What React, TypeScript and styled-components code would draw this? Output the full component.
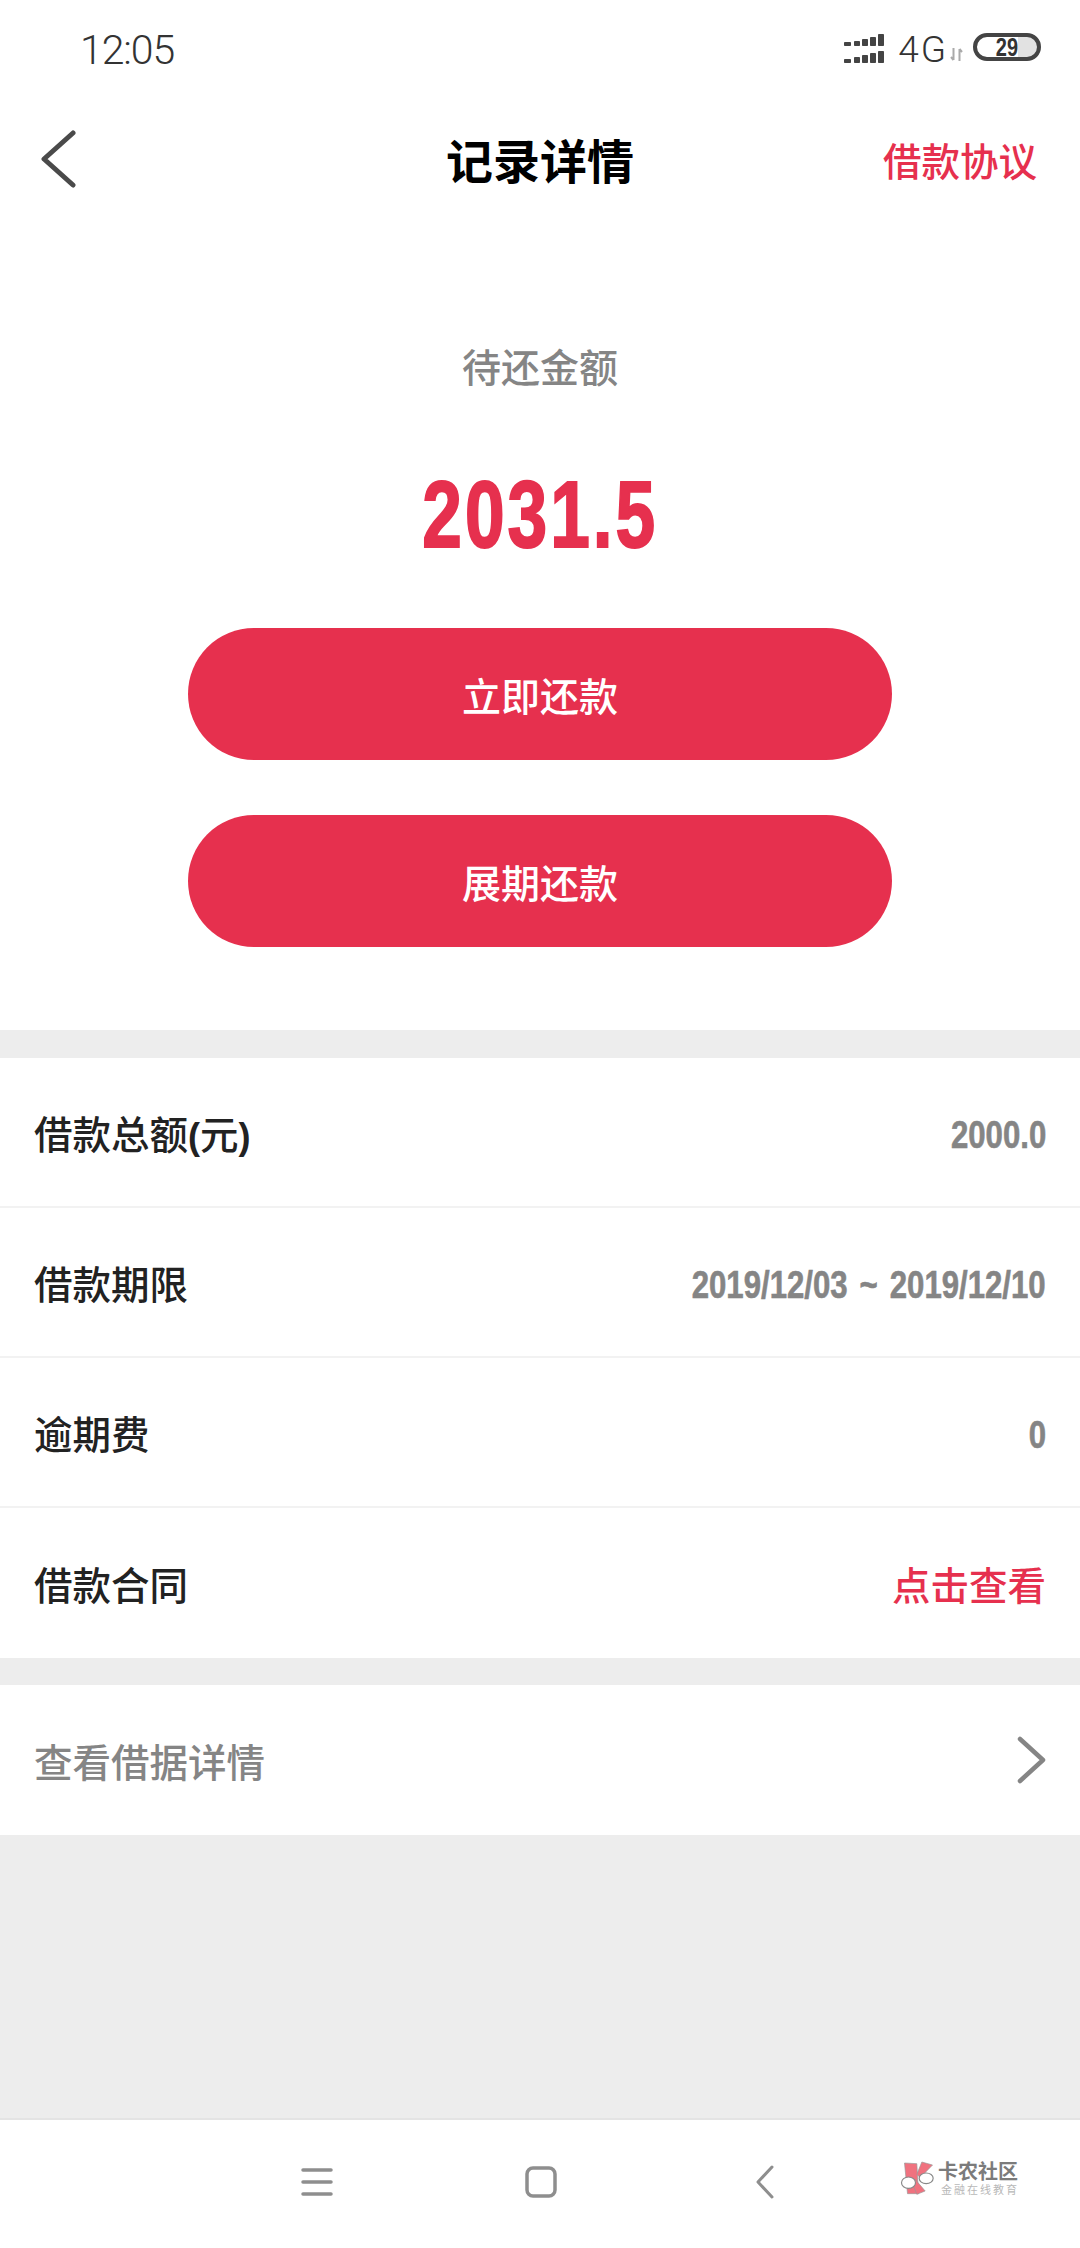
import React from "react";
import styled, { createGlobalStyle } from "styled-components";

const RED = "#e6304e";
const GREY = "#858585";
const BAND = "#ededed";
const CJK = '"Noto Sans CJK SC", "Noto Sans", sans-serif';
const DIGITS = '"Liberation Sans", sans-serif';

const GlobalStyle = createGlobalStyle`
  html, body {
    margin: 0;
    padding: 0;
    background: #fff;
  }
  * {
    box-sizing: border-box;
  }
`;

const Page = styled.div`
  width: 1080px;
  height: 2248px;
  display: flex;
  flex-direction: column;
  background: ${BAND};
  font-family: ${CJK};
  overflow: hidden;
`;

const StatusBar = styled.div`
  height: 100px;
  flex: none;
  display: flex;
  align-items: flex-start;
  justify-content: space-between;
  padding: 28px 39px 0 80px;
  background: #fff;
`;

const Time = styled.span`
  font-family: Roboto, sans-serif;
  font-size: 41px;
  font-weight: 300;
  line-height: 44px;
  color: #333;
  letter-spacing: -1.1px;
`;

const StatusIcons = styled.div`
  display: flex;
  align-items: flex-start;
  padding-top: 5px;
`;

const NetworkLabel = styled.span`
  font-family: Roboto, sans-serif;
  font-size: 37px;
  font-weight: 300;
  line-height: 34px;
  letter-spacing: 2px;
  color: #333;
  margin-left: 14px;
`;

const Arrows = styled.svg`
  width: 13px;
  height: 13px;
  margin: 15px 10px 0 2px;
`;

const Battery = styled.div`
  width: 68px;
  height: 28px;
  border: 4px solid #444;
  border-radius: 14px;
  background: linear-gradient(to right, #fff 0 41px, #e2e2e2 41px 100%);
  text-align: center;
`;

const BatteryLevel = styled.span`
  display: inline-block;
  font-family: ${DIGITS};
  font-weight: 700;
  font-size: 25px;
  line-height: 20px;
  color: #333;
  transform: scaleX(0.8);
`;

const Header = styled.header`
  height: 118px;
  flex: none;
  display: flex;
  align-items: center;
  justify-content: space-between;
  position: relative;
  padding: 0 43px 0 40px;
  background: #fff;
`;

const Title = styled.h1`
  position: absolute;
  left: 0;
  right: 0;
  margin: 0;
  text-align: center;
  font-size: 47px;
  line-height: 60px;
  font-weight: 700;
  color: #000;
`;

const HeaderLink = styled.a`
  position: relative;
  font-size: 38.5px;
  line-height: 50px;
  font-weight: 500;
  color: ${RED};
`;

const Hero = styled.section`
  flex: none;
  display: flex;
  flex-direction: column;
  align-items: center;
  padding: 122px 0 83px;
  background: #fff;
`;

const AmountLabel = styled.div`
  font-size: 39px;
  line-height: 50px;
  font-weight: 500;
  color: ${GREY};
`;

const Amount = styled.div`
  margin: 64px 0 54px;
  height: 120px;
  font-family: ${DIGITS};
  font-weight: 700;
  font-size: 95px;
  line-height: 120px;
  letter-spacing: 4px;
  color: ${RED};
  -webkit-text-stroke: 2px ${RED};
  transform: scaleX(0.75);
`;

const ActionButton = styled.button`
  width: 704px;
  height: 132px;
  border: none;
  border-radius: 66px;
  background: ${RED};
  color: #fff;
  font-family: ${CJK};
  font-size: 39px;
  font-weight: 500;
  padding: 0;

  & + & {
    margin-top: 55px;
  }
`;

const Card = styled.section<{ $top: number }>`
  flex: none;
  margin-top: ${(p) => p.$top}px;
  background: #fff;
`;

const Row = styled.div`
  height: 150px;
  display: flex;
  align-items: center;
  justify-content: space-between;
  padding: 0 34px;
  border-bottom: 2px solid #f2f2f2;

  &:last-child {
    border-bottom: none;
  }
`;

const RowLabel = styled.span<{ $muted?: boolean }>`
  font-size: 38.5px;
  line-height: 50px;
  font-weight: 500;
  color: ${(p) => (p.$muted ? GREY : "#222")};
`;

const Paren = styled.span`
  font-family: ${DIGITS};
  font-weight: 700;
  font-size: 36px;
  line-height: 0;
`;

const RowValue = styled.span`
  display: inline-block;
  margin-top: 6px;
  font-family: ${DIGITS};
  font-weight: 700;
  font-size: 38px;
  line-height: 50px;
  word-spacing: 4px;
  color: ${GREY};
  -webkit-text-stroke: 0.6px ${GREY};
  transform: scaleX(0.82);
  transform-origin: right center;
`;

const RowLink = styled.a`
  font-size: 38.5px;
  line-height: 50px;
  font-weight: 500;
  color: ${RED};
`;

const Spacer = styled.div`
  flex: 1;
`;

const NavBar = styled.nav`
  height: 130px;
  flex: none;
  display: grid;
  grid-template-columns: repeat(3, 224px) 1fr;
  align-items: center;
  justify-items: center;
  padding-left: 205px;
  padding-bottom: 4px;
  background: #fff;
  border-top: 2px solid #e4e4e4;
`;

const Logo = styled.div`
  justify-self: start;
  margin: 0 0 8px 23px;
  display: flex;
  align-items: center;
  gap: 1px;
`;

const LogoText = styled.div`
  display: flex;
  flex-direction: column;
`;

const LogoName = styled.span`
  font-size: 20px;
  line-height: 22px;
  font-weight: 700;
  color: #7b7b7b;
`;

const LogoSlogan = styled.span`
  font-size: 11px;
  line-height: 14px;
  letter-spacing: 2px;
  margin-left: 3px;
  color: #b8b8b8;
`;

const rows = [
  { label: <>借款总额<Paren>(</Paren>元<Paren>)</Paren></>, value: "2000.0", id: "total" },
  { label: "借款期限", value: "2019/12/03 ~ 2019/12/10", id: "term" },
  { label: "逾期费", value: "0", id: "overdue" },
];

const signalBars = [
  [0, 9, 7, 4],
  [10, 8, 6, 5],
  [18, 6, 6, 7],
  [26, 4, 6, 9],
  [34, 1, 6, 12],
  [0, 26, 7, 4],
  [10, 24, 6, 6],
  [18, 22, 6, 8],
  [26, 20, 6, 10],
  [34, 18, 6, 12],
];

const App = () => {
  return (
    <Page>
      <GlobalStyle />
      <StatusBar>
        <Time>12:05</Time>
        <StatusIcons>
          <svg width="40" height="30" viewBox="0 0 40 30" fill="#444">
            {signalBars.map(([x, y, w, h]) => (
              <rect key={`${x}-${y}`} x={x} y={y} width={w} height={h} rx="0.8" />
            ))}
          </svg>
          <NetworkLabel>4G</NetworkLabel>
          <Arrows viewBox="0 0 13 13" fill="none" stroke="#aaa" strokeWidth="2">
            <path d="M3.5 0v12M1 9l2.5 3M9.5 13V1M12 4L9.5 1" />
          </Arrows>
          <Battery>
            <BatteryLevel>29</BatteryLevel>
          </Battery>
        </StatusIcons>
      </StatusBar>

      <Header>
        <svg width="36" height="58" viewBox="0 0 36 58" fill="none">
          <path d="M33 3L4 29l29 26" stroke="#4a4a4a" strokeWidth="5" strokeLinecap="round" strokeLinejoin="round" />
        </svg>
        <Title>记录详情</Title>
        <HeaderLink>借款协议</HeaderLink>
      </Header>

      <Hero>
        <AmountLabel>待还金额</AmountLabel>
        <Amount>2031.5</Amount>
        <ActionButton>立即还款</ActionButton>
        <ActionButton>展期还款</ActionButton>
      </Hero>

      <Card $top={28}>
        {rows.map((r) => (
          <Row key={r.id}>
            <RowLabel>{r.label}</RowLabel>
            <RowValue>{r.value}</RowValue>
          </Row>
        ))}
        <Row>
          <RowLabel>借款合同</RowLabel>
          <RowLink>点击查看</RowLink>
        </Row>
      </Card>

      <Card $top={27}>
        <Row>
          <RowLabel $muted>查看借据详情</RowLabel>
          <svg width="30" height="48" viewBox="0 0 30 48" fill="none">
            <path d="M4 3l23 21L4 45" stroke="#858585" strokeWidth="4.5" strokeLinecap="round" strokeLinejoin="round" />
          </svg>
        </Row>
      </Card>

      <Spacer />

      <NavBar>
        <svg width="32" height="28" viewBox="0 0 32 28" fill="none" stroke="#8e8e8e" strokeWidth="3.5" strokeLinecap="round">
          <path d="M2 2h28M2 14h28M2 26h28" />
        </svg>
        <svg width="32" height="32" viewBox="0 0 32 32" fill="none">
          <rect x="2" y="2" width="28" height="28" rx="6" stroke="#8e8e8e" strokeWidth="3.5" />
        </svg>
        <svg width="20" height="34" viewBox="0 0 20 34" fill="none">
          <path d="M17 2L3 17l14 15" stroke="#8e8e8e" strokeWidth="3" strokeLinecap="round" strokeLinejoin="round" />
        </svg>
        <Logo>
          <svg width="37" height="35" viewBox="60 30 110 105">
            <path d="M73 36l37 2 5 90H82z" fill="#f0727f" stroke="#999" strokeWidth="2" />
            <path d="M125 33l32 9-37 38-10-10z" fill="#f0727f" stroke="#999" strokeWidth="2" />
            <path d="M105 85l30 35-25 10-10-25z" fill="#f0727f" stroke="#999" strokeWidth="2" />
            <ellipse cx="85" cy="95" rx="21" ry="17" fill="#fff" stroke="#888" strokeWidth="3.5" />
            <ellipse cx="138" cy="82" rx="21" ry="16" fill="#fff" stroke="#888" strokeWidth="3.5" />
          </svg>
          <LogoText>
            <LogoName>卡农社区</LogoName>
            <LogoSlogan>金融在线教育</LogoSlogan>
          </LogoText>
        </Logo>
      </NavBar>
    </Page>
  );
};

export default App;
